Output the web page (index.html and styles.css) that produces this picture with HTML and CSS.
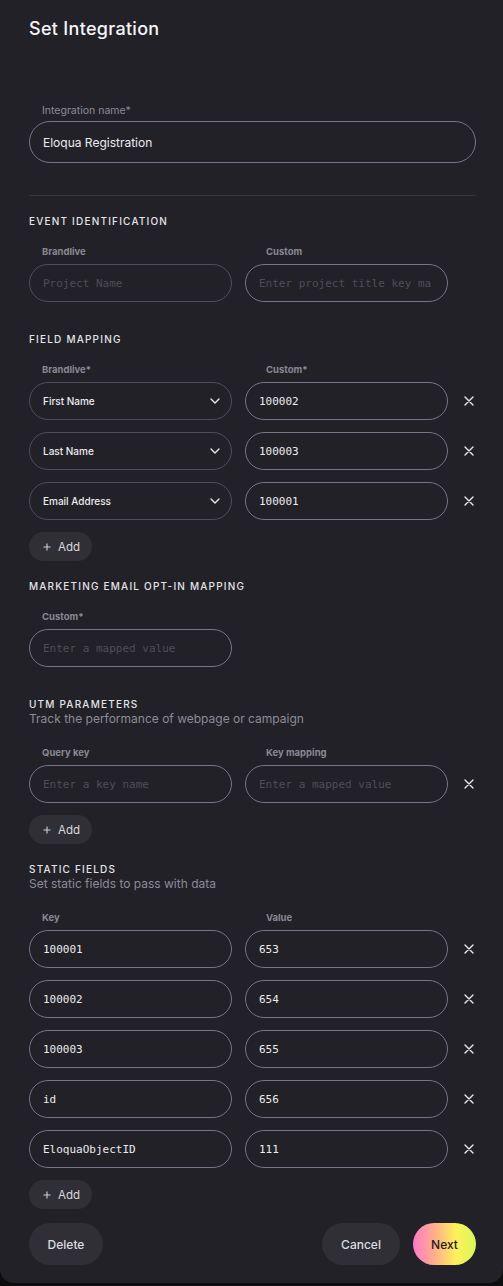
FILE: index.html
```html
<!DOCTYPE html>
<html>
<head>
<meta charset="utf-8">
<link rel="stylesheet" href="styles.css">
</head>
<body>
<div class="card">
  <h1 class="title">Set Integration</h1>

  <div class="name-field">
    <div class="name-label">Integration name*</div>
    <div class="input big"><span class="val sans">Eloqua Registration</span></div>
  </div>

  <div class="divider"></div>

  <div class="section first">
    <div class="sec-title">EVENT IDENTIFICATION</div>
    <div class="grid labels"><div class="flabel">Brandlive</div><div class="flabel">Custom</div></div>
    <div class="grid">
      <div class="input dim"><span class="ph">Project Name</span></div>
      <div class="input"><span class="ph">Enter project title key ma</span></div>
    </div>
  </div>

  <div class="section">
    <div class="sec-title">FIELD MAPPING</div>
    <div class="grid labels"><div class="flabel">Brandlive*</div><div class="flabel">Custom*</div></div>
    <div class="rows">
      <div class="grid">
        <div class="input select"><span class="sel">First Name</span><svg class="chev" viewBox="0 0 10 6" width="10" height="6"><path d="M1 1l4 4 4-4" fill="none" stroke="#e8e8ec" stroke-width="1.4" stroke-linecap="round" stroke-linejoin="round"/></svg></div>
        <div class="input"><span class="val">100002</span></div>
        <svg class="x" viewBox="0 0 10 10" width="10" height="10"><path d="M1 1l8 8M9 1l-8 8" stroke="#e8e8ec" stroke-width="1.4" stroke-linecap="round"/></svg>
      </div>
      <div class="grid">
        <div class="input select"><span class="sel">Last Name</span><svg class="chev" viewBox="0 0 10 6" width="10" height="6"><path d="M1 1l4 4 4-4" fill="none" stroke="#e8e8ec" stroke-width="1.4" stroke-linecap="round" stroke-linejoin="round"/></svg></div>
        <div class="input"><span class="val">100003</span></div>
        <svg class="x" viewBox="0 0 10 10" width="10" height="10"><path d="M1 1l8 8M9 1l-8 8" stroke="#e8e8ec" stroke-width="1.4" stroke-linecap="round"/></svg>
      </div>
      <div class="grid">
        <div class="input select"><span class="sel">Email Address</span><svg class="chev" viewBox="0 0 10 6" width="10" height="6"><path d="M1 1l4 4 4-4" fill="none" stroke="#e8e8ec" stroke-width="1.4" stroke-linecap="round" stroke-linejoin="round"/></svg></div>
        <div class="input"><span class="val">100001</span></div>
        <svg class="x" viewBox="0 0 10 10" width="10" height="10"><path d="M1 1l8 8M9 1l-8 8" stroke="#e8e8ec" stroke-width="1.4" stroke-linecap="round"/></svg>
      </div>
    </div>
    <button class="add"><svg viewBox="0 0 8 8" width="8" height="8"><path d="M4 0.5v7M0.5 4h7" stroke="#cfcfd4" stroke-width="1.1"/></svg>Add</button>
  </div>

  <div class="section after-add">
    <div class="sec-title">MARKETING EMAIL OPT-IN MAPPING</div>
    <div class="grid labels"><div class="flabel">Custom*</div></div>
    <div class="grid">
      <div class="input"><span class="ph">Enter a mapped value</span></div>
    </div>
  </div>

  <div class="section">
    <div class="sec-title">UTM PARAMETERS</div>
    <div class="sec-sub">Track the performance of webpage or campaign</div>
    <div class="grid labels sub"><div class="flabel">Query key</div><div class="flabel">Key mapping</div></div>
    <div class="rows">
      <div class="grid">
        <div class="input"><span class="ph">Enter a key name</span></div>
        <div class="input"><span class="ph">Enter a mapped value</span></div>
        <svg class="x" viewBox="0 0 10 10" width="10" height="10"><path d="M1 1l8 8M9 1l-8 8" stroke="#e8e8ec" stroke-width="1.4" stroke-linecap="round"/></svg>
      </div>
    </div>
    <button class="add"><svg viewBox="0 0 8 8" width="8" height="8"><path d="M4 0.5v7M0.5 4h7" stroke="#cfcfd4" stroke-width="1.1"/></svg>Add</button>
  </div>

  <div class="section after-add">
    <div class="sec-title">STATIC FIELDS</div>
    <div class="sec-sub">Set static fields to pass with data</div>
    <div class="grid labels sub"><div class="flabel">Key</div><div class="flabel">Value</div></div>
    <div class="rows">
      <div class="grid">
        <div class="input"><span class="val">100001</span></div>
        <div class="input"><span class="val">653</span></div>
        <svg class="x" viewBox="0 0 10 10" width="10" height="10"><path d="M1 1l8 8M9 1l-8 8" stroke="#e8e8ec" stroke-width="1.4" stroke-linecap="round"/></svg>
      </div>
      <div class="grid">
        <div class="input"><span class="val">100002</span></div>
        <div class="input"><span class="val">654</span></div>
        <svg class="x" viewBox="0 0 10 10" width="10" height="10"><path d="M1 1l8 8M9 1l-8 8" stroke="#e8e8ec" stroke-width="1.4" stroke-linecap="round"/></svg>
      </div>
      <div class="grid">
        <div class="input"><span class="val">100003</span></div>
        <div class="input"><span class="val">655</span></div>
        <svg class="x" viewBox="0 0 10 10" width="10" height="10"><path d="M1 1l8 8M9 1l-8 8" stroke="#e8e8ec" stroke-width="1.4" stroke-linecap="round"/></svg>
      </div>
      <div class="grid">
        <div class="input"><span class="val">id</span></div>
        <div class="input"><span class="val">656</span></div>
        <svg class="x" viewBox="0 0 10 10" width="10" height="10"><path d="M1 1l8 8M9 1l-8 8" stroke="#e8e8ec" stroke-width="1.4" stroke-linecap="round"/></svg>
      </div>
      <div class="grid">
        <div class="input"><span class="val">EloquaObjectID</span></div>
        <div class="input"><span class="val">111</span></div>
        <svg class="x" viewBox="0 0 10 10" width="10" height="10"><path d="M1 1l8 8M9 1l-8 8" stroke="#e8e8ec" stroke-width="1.4" stroke-linecap="round"/></svg>
      </div>
    </div>
    <button class="add"><svg viewBox="0 0 8 8" width="8" height="8"><path d="M4 0.5v7M0.5 4h7" stroke="#cfcfd4" stroke-width="1.1"/></svg>Add</button>
  </div>

  <div class="footer">
    <button class="btn">Delete</button>
    <div class="right">
      <button class="btn cancel">Cancel</button>
      <button class="btn next">Next</button>
    </div>
  </div>
</div>
</body>
</html>
```

FILE: styles.css
```css
* { box-sizing: border-box; }
html, body { margin: 0; padding: 0; }
body {
  background: #0d0d0f;
  font-family: Inter, "Open Sans", sans-serif;
  width: 503px;
  height: 1286px;
}
.card {
  width: 503px;
  height: 1283px;
  background: #222127;
  border-radius: 0 0 14px 14px;
  padding: 17px 27px 0 29px;
}
.title {
  margin: 0;
  font-size: 18px;
  line-height: 24px;
  font-weight: 500;
  color: #f5f5f7;
  letter-spacing: 0.3px;
}
.name-field { margin-top: 63px; }
.name-label {
  font-size: 10.5px;
  line-height: 14px;
  color: #8d8b97;
  padding-left: 13px;
  margin-bottom: 3px;
}
.input {
  height: 38px;
  border: 1px solid #77748a;
  border-radius: 20px;
  display: flex;
  align-items: center;
  padding: 0 12px 0 13px;
  overflow: hidden;
  white-space: nowrap;
}
.input.big { height: 42px; border-radius: 21px; }
.input.dim, .input.select { border-color: #4f4d59; }
.val {
  font-family: "DejaVu Sans Mono", monospace;
  font-size: 11px;
  color: #ececf0;
}
.val.sans {
  font-family: Inter, "Open Sans", sans-serif;
  font-size: 12px;
  color: #ececf0;
}
.ph {
  font-family: "DejaVu Sans Mono", monospace;
  font-size: 11px;
  color: #4f4d58;
}
.sel {
  font-size: 10px;
  font-weight: 500;
  color: #ececf0;
  flex: 1;
}
.chev { flex: none; margin-right: -1px; }
.divider {
  margin-top: 32px;
  height: 1px;
  background: #37363d;
}
.section { margin-top: 30px; }
.section.first { margin-top: 18px; }
.section.after-add { margin-top: 18px; }
.sec-title {
  font-size: 10px;
  line-height: 14px;
  font-weight: 500;
  letter-spacing: 1.2px;
  color: #e4e4e8;
}
.sec-sub {
  font-size: 12px;
  line-height: 16px;
  color: #8d8b97;
}
.grid {
  display: grid;
  grid-template-columns: 203px 203px 1fr;
  column-gap: 13px;
  align-items: center;
}
.grid .x { justify-self: center; margin-left: 1px; }
.labels { margin-top: 18px; margin-bottom: 6px; }
.labels.sub { margin-top: 20px; }
.flabel {
  font-size: 9.5px;
  line-height: 12px;
  font-weight: 700;
  color: #8a8894;
  padding-left: 13px;
}
.flabel + .flabel { padding-left: 21px; }
.rows { display: flex; flex-direction: column; gap: 12px; }
.add {
  margin-top: 12px;
  height: 29px;
  width: 63px;
  border: none;
  border-radius: 15px;
  background: #302f36;
  color: #dadade;
  font-family: Inter, "Open Sans", sans-serif;
  font-size: 11.5px;
  display: flex;
  align-items: center;
  gap: 7px;
  padding: 0 0 0 14px;
}
.footer {
  margin-top: 14px;
  display: flex;
  justify-content: space-between;
}
.right { display: flex; gap: 13px; }
.btn {
  height: 42px;
  border: none;
  border-radius: 21px;
  background: #302f36;
  color: #dcdce0;
  font-family: Inter, "Open Sans", sans-serif;
  font-size: 12px;
  font-weight: 500;
  padding: 0;
  width: 74px;
}
.btn.cancel { width: 78px; }
.btn.next {
  width: 63px;
  color: #1c1b20;
  background: linear-gradient(90deg, #ff78c8 0%, #ffb08a 35%, #fff05a 68%, #d6f75a 100%);
}
```
